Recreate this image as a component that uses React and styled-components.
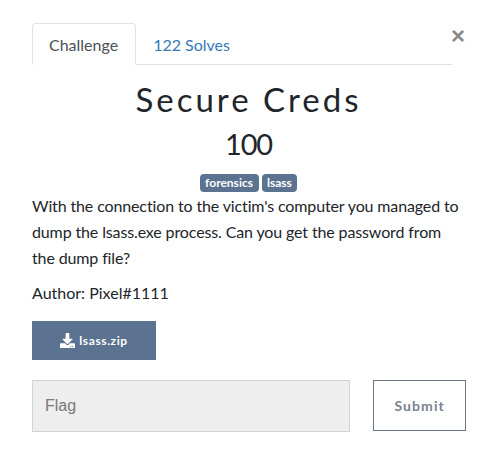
import React from "react";
import styled, { createGlobalStyle } from "styled-components";
import { FaDownload } from "react-icons/fa";

const Global = createGlobalStyle`
  html, body { margin: 0; padding: 0; background: #fff; }
  body { font-family: Lato, "Liberation Sans", sans-serif; color: #212529; font-size: 16px; line-height: 24px; }
  * { box-sizing: border-box; }
`;

const Modal = styled.div`
  position: relative;
  width: 495px;
  height: 471px;
  padding: 23px 29px 0 32px;
`;

const Close = styled.button`
  position: absolute;
  top: 24px;
  left: 451px;
  padding: 0;
  border: 0;
  background: none;
  color: #8a8a8a;
  font: 700 24px/24px "Liberation Sans", sans-serif;
`;

const Tabs = styled.nav`
  display: flex;
  width: 420px;
  height: 42px;
  border-bottom: 1px solid #dee2e6;
`;

const Tab = styled.a`
  height: 42px;
  padding: 9px ${p => (p.$active ? "17px" : "16px")} 9px 16px;
  font-size: 16px;
  line-height: 24px;
  color: ${p => (p.$active ? "#495057" : "#337ab7")};
  background: ${p => (p.$active ? "#fff" : "transparent")};
  border: 1px solid ${p => (p.$active ? "#dee2e6" : "transparent")};
  border-bottom-color: ${p => (p.$active ? "#fff" : "transparent")};
  border-radius: 4px 4px 0 0;
`;

const Title = styled.h3`
  margin: 12px 0 0;
  width: 433px;
  text-align: center;
  font-weight: 400;
  font-size: 33px;
  line-height: 44px;
  letter-spacing: 3px;
  color: #212529;
`;

const Value = styled.h4`
  margin: 6px 0 0;
  width: 433px;
  text-align: center;
  font-weight: 400;
  font-size: 29px;
  line-height: 34px;
  letter-spacing: -1.2px;
`;

const TagRow = styled.div`
  display: flex;
  justify-content: center;
  gap: 3px;
  width: 433px;
  margin-top: 13px;
`;

const Tag = styled.span`
  height: 18px;
  padding: 0 5.5px;
  border-radius: 4px;
  background: #5b7290;
  color: #fff;
  font-size: 12px;
  font-weight: 700;
  line-height: 18px;
`;

const Description = styled.p`
  margin: 1px 0 0;
  width: 432px;
  font-size: 16px;
  line-height: 26px;
  letter-spacing: -0.13px;
`;

const Author = styled.p`
  margin: 10px 0 0;
  font-size: 16px;
  line-height: 24px;
`;

const FileButton = styled.a`
  display: flex;
  align-items: center;
  justify-content: center;
  gap: 4px;
  width: 124px;
  height: 39px;
  margin-top: 16px;
  background: #5b7290;
  color: #fff;
  font-size: 12px;
  font-weight: 700;
  letter-spacing: 0.6px;
`;

const SubmitRow = styled.form`
  display: flex;
  gap: 23px;
  margin-top: 20px;
`;

const FlagInput = styled.input`
  width: 319px;
  height: 52px;
  padding: 0 12px;
  background: #eee;
  border: 1.5px solid #d0d3d8;
  font: 400 16px "Liberation Sans", sans-serif;
  outline: none;
  &::placeholder { color: #7a7a7a; opacity: 1; }
`;

const SubmitButton = styled.button`
  width: 93px;
  height: 51px;
  padding: 0;
  background: #fff;
  border: 1px solid #6c7583;
  border-radius: 0;
  color: #7a8290;
  font: 700 14px Lato, sans-serif;
  letter-spacing: 1.1px;
`;

export default function App() {
  return (
    <Modal>
      <Global />
      <Close aria-label="Close">×</Close>
      <Tabs>
        <Tab $active>Challenge</Tab>
        <Tab>122 Solves</Tab>
      </Tabs>
      <Title>Secure Creds</Title>
      <Value>100</Value>
      <TagRow>
        <Tag>forensics</Tag>
        <Tag>lsass</Tag>
      </TagRow>
      <Description>
        With the connection to the victim's computer you managed to dump the lsass.exe process. Can you get the password from the dump file?
      </Description>
      <Author>Author: Pixel#1111</Author>
      <FileButton>
        <FaDownload size={15} />
        <span>lsass.zip</span>
      </FileButton>
      <SubmitRow>
        <FlagInput placeholder="Flag" />
        <SubmitButton type="button">Submit</SubmitButton>
      </SubmitRow>
    </Modal>
  );
}
